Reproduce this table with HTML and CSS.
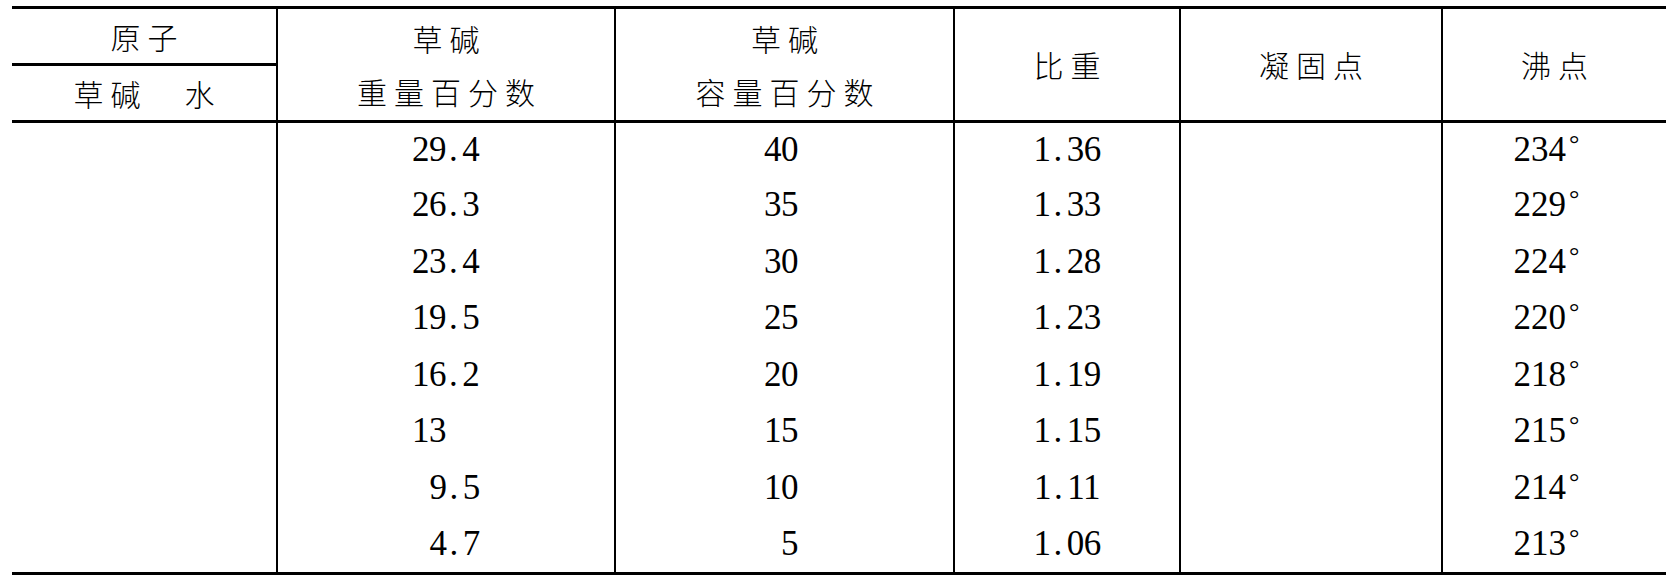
FILE: index.html
```html
<!DOCTYPE html>
<html lang="zh">
<head>
<meta charset="utf-8">
<title>草碱</title>
<link rel="stylesheet" href="styles.css">
</head>
<body>
<table class="tbl">
  <colgroup>
    <col class="w1"><col class="w2"><col class="w3"><col class="w4"><col class="w5"><col class="w6">
  </colgroup>
  <thead>
    <tr class="ha">
      <th class="hc sub">原子</th>
      <th class="hc two" rowspan="2">草碱<br>重量百分数</th>
      <th class="hc two" rowspan="2">草碱<br>容量百分数</th>
      <th class="hc" rowspan="2">比重</th>
      <th class="hc" rowspan="2">凝固点</th>
      <th class="hc" rowspan="2">沸点</th>
    </tr>
    <tr class="hb">
      <th class="hc">草碱　水</th>
    </tr>
  </thead>
  <tbody>
    <tr><td></td><td class="n2">29<span class="pt">.</span>4</td><td class="n3">40</td><td class="n4">1<span class="pt">.</span>36</td><td></td><td class="n6">234<span class="deg">°</span></td></tr>
    <tr><td></td><td class="n2">26<span class="pt">.</span>3</td><td class="n3">35</td><td class="n4">1<span class="pt">.</span>33</td><td></td><td class="n6">229<span class="deg">°</span></td></tr>
    <tr><td></td><td class="n2">23<span class="pt">.</span>4</td><td class="n3">30</td><td class="n4">1<span class="pt">.</span>28</td><td></td><td class="n6">224<span class="deg">°</span></td></tr>
    <tr><td></td><td class="n2">19<span class="pt">.</span>5</td><td class="n3">25</td><td class="n4">1<span class="pt">.</span>23</td><td></td><td class="n6">220<span class="deg">°</span></td></tr>
    <tr><td></td><td class="n2">16<span class="pt">.</span>2</td><td class="n3">20</td><td class="n4">1<span class="pt">.</span>19</td><td></td><td class="n6">218<span class="deg">°</span></td></tr>
    <tr><td></td><td class="n2">13</td><td class="n3">15</td><td class="n4">1<span class="pt">.</span>15</td><td></td><td class="n6">215<span class="deg">°</span></td></tr>
    <tr><td></td><td class="n2 ind">9<span class="pt">.</span>5</td><td class="n3">10</td><td class="n4">1<span class="pt">.</span>11</td><td></td><td class="n6">214<span class="deg">°</span></td></tr>
    <tr><td></td><td class="n2 ind">4<span class="pt">.</span>7</td><td class="n3">5</td><td class="n4">1<span class="pt">.</span>06</td><td></td><td class="n6">213<span class="deg">°</span></td></tr>
  </tbody>
</table>
</body>
</html>
```
FILE: styles.css
```css
html, body {
  margin: 0;
  padding: 0;
  background: #fff;
  color: #000;
}

.tbl {
  border-collapse: collapse;
  table-layout: fixed;
  width: 1654px;
  margin: 6px 0 0 12px;
  border-top: 3px solid #000;
  border-bottom: 3px solid #000;
  font-family: "Liberation Serif", "Times New Roman", serif;
}

.w1 { width: 265px; }
.w2 { width: 338px; }
.w3 { width: 339px; }
.w4 { width: 226px; }
.w5 { width: 262px; }
.w6 { width: 224px; }

th, td {
  padding: 0;
  vertical-align: middle;
  color: #000;
}

tr > * + * {
  border-left: 2px solid #000;
}

.hc {
  font-family: "Noto Sans CJK SC", "Noto Sans CJK JP", sans-serif;
  font-weight: 300;
  font-size: 30px;
  letter-spacing: 7px;
  padding-left: 7px;
  text-align: center;
  line-height: 53px;
}

.ha { height: 57px; }
.hb { height: 57px; }

.sub {
  border-bottom: 3px solid #000;
}

tbody tr:first-child td {
  border-top: 3px solid #000;
}

tbody tr {
  height: 56.5px;
}

tbody td {
  font-family: "Liberation Serif", "Times New Roman", serif;
  font-weight: 400;
  font-size: 35px;
  letter-spacing: -0.5px;
  line-height: 1;
  padding-bottom: 3px;
}

.pt {
  margin: 0 5px 0 3px;
}

.n2 {
  text-align: left;
  padding-left: 134px;
}

.n2.ind {
  text-indent: 1ch;
}

.n3 {
  text-align: right;
  padding-right: 155px;
}

.n4 {
  text-align: center;
}

.n6 {
  text-align: center;
  padding-right: 16px;
  letter-spacing: 0;
}

.deg {
  font-size: 26px;
  margin-left: 3px;
  vertical-align: 9px;
  line-height: 0;
}
```
